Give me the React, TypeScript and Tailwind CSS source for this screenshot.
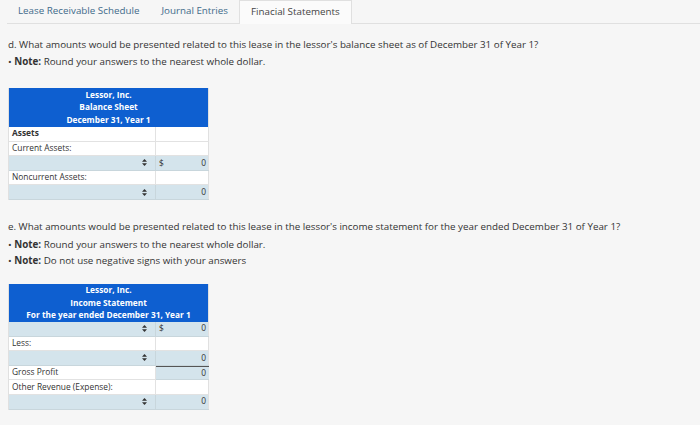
import React from "react";

const Arrows = () => (
  <svg width="5" height="7" viewBox="0 0 5 7" className="inline-block">
    <path d="M2.5 0 L5 2.7 L0 2.7 Z" fill="#333" />
    <path d="M2.5 7 L5 4.3 L0 4.3 Z" fill="#333" />
  </svg>
);

const Row = ({ left, right, input, rightBlue, topDark }: { left?: React.ReactNode; right?: React.ReactNode; input?: boolean; rightBlue?: boolean; topDark?: boolean }) => (
  <div className={`grid grid-cols-[147px_53px] h-[14.6px] ${input ? "bg-[#d4e4ec]" : "bg-white"}`}>
    <div className={`flex items-center px-[3px] border-r border-b ${input ? "border-[#c8d6dc]" : "border-[#e2e2e2]"} ${input ? "justify-end pr-[8px]" : ""}`}>
      {input ? <Arrows /> : left}
    </div>
    <div className={`flex items-center justify-between px-[3px] border-b ${rightBlue ? "bg-[#d4e4ec]" : ""} ${topDark ? "border-t border-t-[#555]" : ""} ${input || rightBlue ? "border-[#c8d6dc]" : "border-[#e2e2e2]"}`}>
      <span>{right === "$" || (Array.isArray(right) && right[0]) ? "$" : ""}</span>
      <span>{right !== undefined ? "0" : ""}</span>
    </div>
  </div>
);

export default function App() {
  return (
    <div className="w-[700px] h-[425px] bg-[#f6f6f6] text-[#333] overflow-hidden" style={{ fontFamily: '"Open Sans", sans-serif' }}>
      <div className="flex items-end h-[24px] ml-[7px] border-b border-[#e0e0e0] text-[9.8px]">
        <div className="px-[11px] h-[23px] flex items-center text-[#3f6a8a]">Lease Receivable Schedule</div>
        <div className="px-[11px] h-[23px] flex items-center text-[#3f6a8a]">Journal Entries</div>
        <div className="px-[11px] h-[24px] flex items-center bg-[#fbfbfb] border border-b-0 border-[#e0e0e0] text-[#444] -mb-px">Finacial Statements</div>
      </div>
      <div className="px-[8px] text-[9.8px]">
        <div className="mt-[14px] leading-[14px]">d. What amounts would be presented related to this lease in the lessor's balance sheet as of December 31 of Year 1?</div>
        <div className="mt-[3px] leading-[14px]">• <b>Note:</b> Round your answers to the nearest whole dollar.</div>

        <div className="mt-[19px] w-[201px] border-l border-r border-[#e0e0e0] text-[8.4px]">
          <div className="bg-[#0e5fd0] text-white font-bold text-center h-[39px] flex flex-col justify-center leading-[12.5px] text-[8.3px]">
            <div>Lessor, Inc.</div>
            <div>Balance Sheet</div>
            <div>December 31, Year 1</div>
          </div>
          <Row left={<b>Assets</b>} />
          <Row left="Current Assets:" />
          <Row input right={["$"]} />
          <Row left="Noncurrent Assets:" />
          <Row input right="0" />
        </div>

        <div className="mt-[20px] leading-[14px]">e. What amounts would be presented related to this lease in the lessor's income statement for the year ended December 31 of Year 1?</div>
        <div className="mt-[4px] leading-[14px]">• <b>Note:</b> Round your answers to the nearest whole dollar.</div>
        <div className="mt-[2px] leading-[14px]">• <b>Note:</b> Do not use negative signs with your answers</div>

        <div className="mt-[16px] w-[201px] border-l border-r border-[#e0e0e0] text-[8.4px]">
          <div className="bg-[#0e5fd0] text-white font-bold text-center h-[38px] flex flex-col justify-center leading-[12.5px] text-[8.3px]">
            <div>Lessor, Inc.</div>
            <div>Income Statement</div>
            <div>For the year ended December 31, Year 1</div>
          </div>
          <Row input right={["$"]} />
          <Row left="Less:" />
          <Row input right="0" />
          <Row left="Gross Profit" right="0" rightBlue topDark />
          <Row left="Other Revenue (Expense):" />
          <Row input right="0" />
        </div>
      </div>
    </div>
  );
}
